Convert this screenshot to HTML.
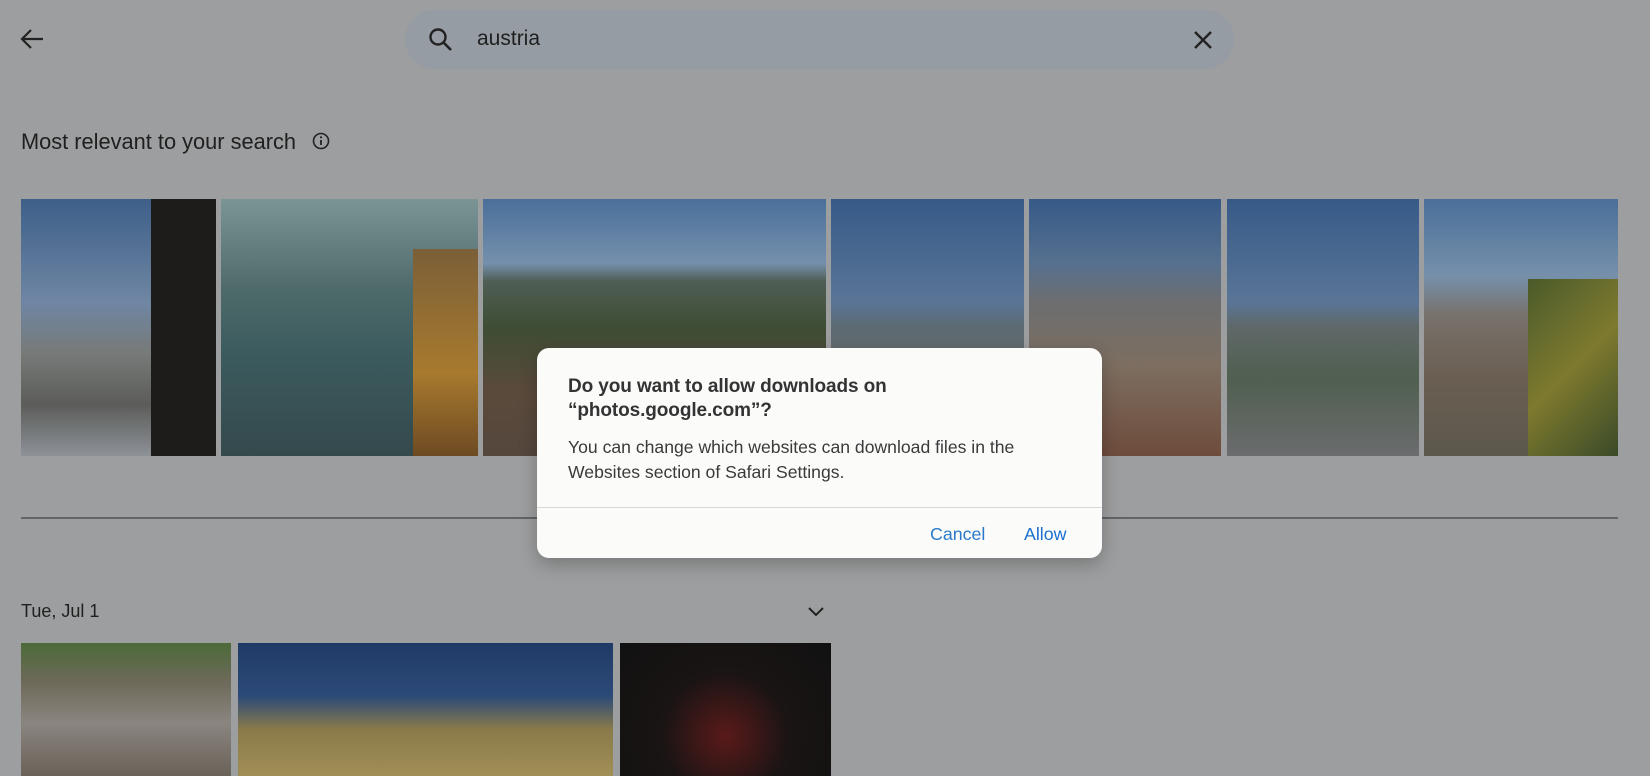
<!DOCTYPE html>
<html><head><meta charset="utf-8"><style>
*{margin:0;padding:0;box-sizing:border-box}
body{width:1650px;height:776px;overflow:hidden;background:#9d9e9f;font-family:"Liberation Sans",sans-serif;color:#1f1f1f;position:relative}
.abs{position:absolute}
.search{left:405px;top:10px;width:829px;height:59px;border-radius:30px;background:#959ca3}
.ph{position:absolute;top:199px;height:257px}
.ph2{position:absolute;top:643px;height:133px}
.dlg{left:537px;top:348px;width:565px;height:210px;background:#fbfbfa;border-radius:12px;box-shadow:0 6px 18px rgba(0,0,0,.25)}
</style></head><body>
<svg class="abs" style="left:19px;top:27px" width="26" height="24" viewBox="0 0 26 24"><path d="M24 12H3M12 3L3 12l9 9" stroke="#222" stroke-width="2.2" fill="none"/></svg>
<div class="abs search"></div>
<svg class="abs" style="left:428px;top:27px" width="26" height="26" viewBox="0 0 26 26"><circle cx="10" cy="10" r="7.5" stroke="#222" stroke-width="2.4" fill="none"/><path d="M15.5 15.5L23 23" stroke="#222" stroke-width="2.6"/></svg>
<div class="abs" style="left:477px;top:27px;font-size:21px;color:#1f1f1f">austria</div>
<svg class="abs" style="left:1193px;top:30px" width="20" height="20" viewBox="0 0 20 20"><path d="M2 2L18 18M18 2L2 18" stroke="#222" stroke-width="2.4"/></svg>
<div class="abs" style="left:21px;top:129px;font-size:21.8px">Most relevant to your search</div>
<svg class="abs" style="left:312px;top:132px" width="18" height="18" viewBox="0 0 18 18"><circle cx="9" cy="9" r="7.5" stroke="#222" stroke-width="1.6" fill="none"/><path d="M9 8v5" stroke="#222" stroke-width="1.8"/><circle cx="9" cy="5.3" r="1.1" fill="#222"/></svg>

<div class="ph" style="left:21px;width:195px;background:linear-gradient(180deg,#3d5f88 0%,#6f86a4 40%,#777a78 60%,#5c5d5a 80%,#8d9298 100%)"><div style="position:absolute;right:0;top:0;width:65px;height:257px;background:#1e1c1a"></div></div>
<div class="ph" style="left:221px;width:257px;background:linear-gradient(180deg,#7b9596 0%,#4e6a6a 35%,#3c5b5e 60%,#34494c 100%)"><div style="position:absolute;right:0;top:50px;width:65px;height:207px;background:linear-gradient(180deg,#7b5f38,#a87a2e 60%,#6d4a22)"></div></div>
<div class="ph" style="left:483px;width:343px;background:linear-gradient(180deg,#4a6f99 0%,#7590ad 25%,#4f5e55 32%,#3e4d34 50%,#5b4a3c 75%,#55473d 100%)"></div>
<div class="ph" style="left:831px;width:193px;background:linear-gradient(180deg,#365a87 0%,#5a7597 40%,#5c6a72 50%,#6f6d6a 70%,#78665a 100%)"></div>
<div class="ph" style="left:1029px;width:192px;background:linear-gradient(180deg,#365a87 0%,#56708f 25%,#6d6e70 40%,#7d6e60 65%,#6e4c3c 100%)"></div>
<div class="ph" style="left:1227px;width:192px;background:linear-gradient(180deg,#365a87 0%,#5a7597 40%,#5f6868 50%,#505f50 70%,#6b6c6e 100%)"></div>
<div class="ph" style="left:1424px;width:194px;background:linear-gradient(180deg,#4a6f99 0%,#7690ab 30%,#77726b 45%,#6a5e52 70%,#5d584c 100%)"><div style="position:absolute;right:0;top:80px;width:90px;height:177px;background:linear-gradient(135deg,#4a5a2a,#7e7a2e 50%,#3a4a28)"></div></div>

<div class="abs" style="left:21px;top:517px;width:1597px;height:2px;background:#626567"></div>
<div class="abs" style="left:21px;top:601px;font-size:18px">Tue, Jul 1</div>
<svg class="abs" style="left:807px;top:606px" width="18" height="12" viewBox="0 0 18 12"><path d="M2 2l7 7 7-7" stroke="#222" stroke-width="2" fill="none"/></svg>
<div class="ph2" style="left:21px;width:210px;background:linear-gradient(180deg,#4c6a3a 0%,#6e6a5a 30%,#8a8580 60%,#6a6258 100%)"></div>
<div class="ph2" style="left:238px;width:375px;background:linear-gradient(180deg,#203a66 0%,#2c4a78 40%,#8a7a4a 65%,#a08f55 100%)"></div>
<div class="ph2" style="left:620px;width:211px;background:radial-gradient(circle at 50% 70%,#5a1a1a 0%,#1a1414 45%,#111 100%)"></div>

<div class="abs dlg">
 <div class="abs" style="left:31px;top:27px;font-size:19px;line-height:24px;font-weight:bold;color:#333;letter-spacing:-.1px">Do you want to allow downloads on<br>“photos.google.com”?</div>
 <div class="abs" style="left:31px;top:87px;font-size:17.6px;line-height:25px;color:#3a3a3a">You can change which websites can download files in the<br>Websites section of Safari Settings.</div>
 <div class="abs" style="left:0;top:159px;width:565px;height:1px;background:#d8d8d8"></div>
 <div class="abs" style="left:393px;top:176px;font-size:17.8px;color:#2a7ac9">Cancel</div>
 <div class="abs" style="left:487px;top:176px;font-size:17.8px;color:#1a6fd0">Allow</div>
</div>
</body></html>
